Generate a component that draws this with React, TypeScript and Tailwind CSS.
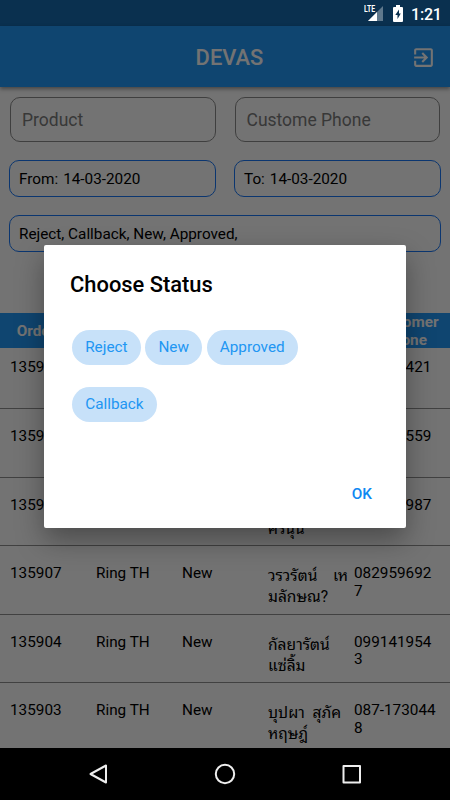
type Order = {
  id: string
  source: string
  status: string
  customer: string[]
  phone: string
}

const HEADERS = ['Order ID', 'Source', 'Status', 'Name', 'Customer Phone']

const ORDERS: Order[] = [
  { id: '135911', source: 'Ring TH', status: 'New', customer: ['สมชาย', 'ใจดี'], phone: '089542421' },
  { id: '135910', source: 'Ring TH', status: 'New', customer: ['มาลี', 'ศรีสุข'], phone: '081273559' },
  { id: '135908', source: 'Ring TH', status: 'New', customer: ['อรุณ', 'ศรีนุ่น'], phone: '086410987' },
  { id: '135907', source: 'Ring TH', status: 'New', customer: ['วรวรัตน์\u00a0\u00a0\u00a0 เห', 'มลักษณ?'], phone: '0829596927' },
  { id: '135904', source: 'Ring TH', status: 'New', customer: ['กัลยารัตน์', 'แซ่ลิ้ม'], phone: '0991419543' },
  { id: '135903', source: 'Ring TH', status: 'New', customer: ['บุปผา\u00a0 สุภัค', 'หฤษฎ์'], phone: '087-1730448' },
]

const STATUS_ROWS = [['Reject', 'New', 'Approved'], ['Callback']]

function StatusBar() {
  return (
    <div className="h-[26px] shrink-0 bg-[#0a304f] flex items-center justify-end pr-[9px] text-white">
      <svg width="20" height="18" viewBox="0 0 20 18" className="mr-[9px]">
        <path d="M19 2v15H4z" fill="#fff" fillOpacity=".35" />
        <path d="M13 8v9H4z" fill="#fff" />
        <text x="0" y="8" fill="#fff" fontSize="9" fontWeight="700" fontFamily="Roboto, sans-serif" textLength="11" lengthAdjust="spacingAndGlyphs">LTE</text>
      </svg>
      <svg width="10" height="17" viewBox="0 0 10 17" className="mr-[8px]">
        <path d="M3 0h4v2h2q1 0 1 1v13q0 1-1 1H1q-1 0-1-1V3q0-1 1-1h2z" fill="#fff" />
        <path d="M6 4.5L2.3 10H4.5v4L7.8 8.5H6z" fill="#0a304f" />
      </svg>
      <span className="w-[30px] text-[16px] font-medium leading-none pt-[3px] tracking-[-0.2px]">1:21</span>
    </div>
  )
}

function AppBar() {
  return (
    <header className="h-[61px] shrink-0 bg-[#2196f3] text-[#fafafa] flex items-center pr-[14px] pl-[38px] shadow-[0_2px_4px_rgba(0,0,0,0.4)]">
      <h1 className="flex-1 text-center text-[21.9px] font-medium pt-[3px] pl-[10px]">DEVAS</h1>
      <svg width="25" height="25" viewBox="0 0 24 24" fill="currentColor" className="mt-[1px]">
        <path d="M10.09 15.59L11.5 17l5-5-5-5-1.41 1.41L12.67 11H3v2h9.67l-2.58 2.59zM19 3H5c-1.11 0-2 .9-2 2v4h2V5h14v14H5v-4H3v4c0 1.1.89 2 2 2h14c1.1 0 2-.9 2-2V5c0-1.1-.9-2-2-2z" />
      </svg>
    </header>
  )
}

function DateField({ label, value }: { label: string; value: string }) {
  return (
    <div className="flex-1 h-[37px] rounded-[10px] border border-[#1976f3] px-[9px] pt-[2px] flex items-center gap-[5px]">
      <span>{label}</span>
      <span>{value}</span>
    </div>
  )
}

function Filters() {
  return (
    <div className="px-[9px] pt-[10px] h-[226px] shrink-0">
      <div className="flex gap-[19px] px-px text-[17.5px] text-[#7a7a7a]">
        <div className="flex-1 h-[45px] rounded-[10px] border border-[#8a8a8a] px-[11px] pt-[1px] flex items-center">Product</div>
        <div className="flex-1 h-[45px] rounded-[10px] border border-[#8a8a8a] px-[11px] pt-[1px] flex items-center">Custome Phone</div>
      </div>
      <div className="flex gap-[18px] mt-[18px]">
        <DateField label="From:" value="14-03-2020" />
        <DateField label="To:" value="14-03-2020" />
      </div>
      <div className="mt-[18px] h-[37px] rounded-[10px] border border-[#1976f3] px-[9px] pt-[2px] flex items-center">
        Reject, Callback, New, Approved,
      </div>
    </div>
  )
}

function OrdersTable() {
  return (
    <div className="flex-1 min-h-0 overflow-hidden">
      <div className="h-[35px] pt-[1px] bg-[#2196f3] text-[#fafafa] grid grid-cols-5 items-center text-center font-bold leading-[17.5px]">
        {HEADERS.map(h => (
          <div key={h} className="px-2">{h}</div>
        ))}
      </div>
      {ORDERS.map((o, i) => (
        <div
          key={o.id}
          className={`grid grid-cols-5 px-[10px] border-b border-[#8f8f8f] leading-[17.5px] ${i === 0 ? 'h-[61px] pt-[11px]' : 'h-[68.6px] pt-[19px]'}`}
        >
          <div>{o.id}</div>
          <div>{o.source}</div>
          <div>{o.status}</div>
          <div className="leading-[21px] whitespace-nowrap pt-[1px] text-[15.6px]">
            {o.customer.map(line => <div key={line}>{line}</div>)}
          </div>
          <div className="break-all pr-[4px]">{o.phone}</div>
        </div>
      ))}
    </div>
  )
}

function StatusDialog() {
  return (
    <div className="absolute left-[44px] top-[245px] w-[362px] h-[283px] bg-white rounded-[2px] shadow-[0_12px_28px_rgba(0,0,0,0.35)] flex flex-col">
      <h2 className="pl-[26px] pt-[24px] text-[21.9px] leading-[32px] font-medium">Choose Status</h2>
      <div className="flex flex-col gap-[22px] pl-[28px] pt-[28.5px]">
        {STATUS_ROWS.map(row => (
          <div key={row[0]} className="flex gap-[4.5px]">
            {row.map(s => (
              <button key={s} className="h-[35px] rounded-full bg-[#c7e1f9] text-[#2196f3] px-[13.2px]">{s}</button>
            ))}
          </div>
        ))}
      </div>
      <button className="mt-auto self-end mr-[34px] mb-[22px] leading-[24px] font-medium text-[#0e88f2]">OK</button>
    </div>
  )
}

function NavBar() {
  return (
    <nav className="h-[52px] shrink-0 bg-black">
      <svg width="450" height="52" fill="none" stroke="#eee" strokeWidth="2" strokeLinejoin="round">
        <path d="M106 17.500v17L90.500 26z" />
        <circle cx="225" cy="26" r="9.200" />
        <rect x="343.500" y="18" width="16.500" height="16.500" />
      </svg>
    </nav>
  )
}

export default function App() {
  return (
    <div className="w-[450px] h-[800px] flex flex-col overflow-hidden bg-black font-['Roboto','Noto_Sans_Thai_Looped','Noto_Sans_Thai','Noto_Sans',sans-serif] text-[15.3px] text-black">
      <StatusBar />
      <div className="relative flex-1 min-h-0 flex flex-col bg-[#fafafa]">
        <AppBar />
        <Filters />
        <OrdersTable />
        <div className="absolute inset-0 bg-black/54" />
      </div>
      <StatusDialog />
      <NavBar />
    </div>
  )
}
